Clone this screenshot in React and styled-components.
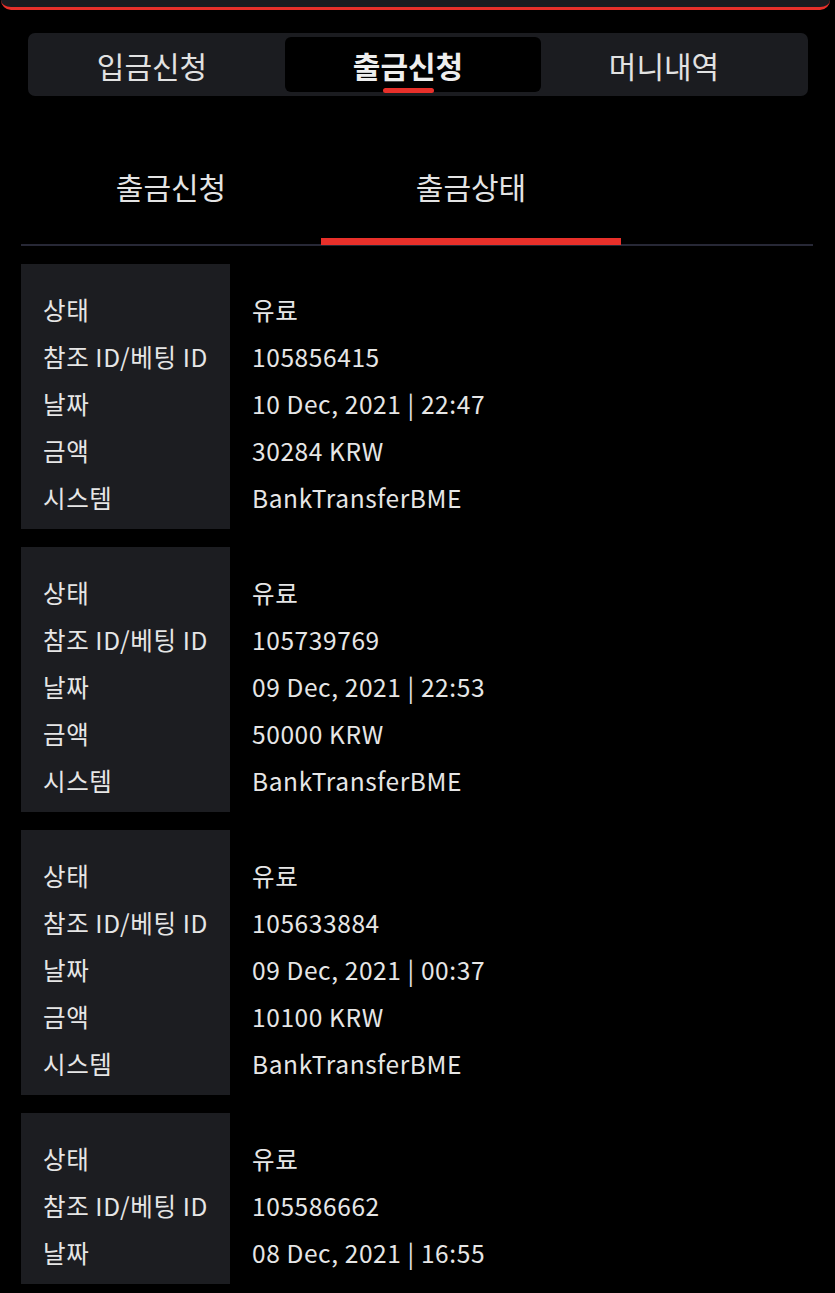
import React from "react";
import styled, { createGlobalStyle } from "styled-components";

const Global = createGlobalStyle`
  html, body { margin: 0; padding: 0; background: #000; overflow: hidden; }
  body { font-family: "Noto Sans CJK KR", "Noto Sans", sans-serif; color: #e6e6e6; }
  * { box-sizing: border-box; }
`;

const Page = styled.div`
  width: 835px;
  height: 1293px;
  background: #000;
  display: flex;
  flex-direction: column;
`;

const HeaderEdge = styled.div`
  height: 10px;
  margin: 0 5px 0 1px;
  background: #1b1c20;
  border-bottom: 3px solid #e8302a;
  border-radius: 0 0 12px 12px;
`;

const TabBar = styled.div`
  margin: 23px 27px 0 28px;
  height: 63px;
  padding: 4px 0 4px 1px;
  background: #1b1c20;
  border-radius: 7px;
  display: grid;
  grid-template-columns: repeat(3, 256px);
`;

const Tab = styled.div`
  position: relative;
  display: flex;
  align-items: center;
  justify-content: center;
  padding-right: 10px;
  font-size: 30px;
  font-weight: ${(p) => (p.$active ? 700 : 400)};
  color: ${(p) => (p.$active ? "#eeeeee" : "#e2e2e2")};
  background: ${(p) => (p.$active ? "#000" : "transparent")};
  border-radius: 6px;
`;

const TabMark = styled.span`
  position: absolute;
  left: 98px;
  bottom: -1px;
  width: 51px;
  height: 5px;
  border-radius: 3px;
  background: #e8302a;
`;

const SubTabs = styled.div`
  margin: 32px 22px 0 21px;
  display: grid;
  grid-template-columns: 300px 300px;
  border-bottom: 2px solid #272836;
`;

const SubTab = styled.div`
  position: relative;
  height: 116px;
  display: flex;
  align-items: center;
  justify-content: center;
  font-size: 30px;
  color: #e4e4e4;
  &::after {
    content: "";
    display: ${(p) => (p.$active ? "block" : "none")};
    position: absolute;
    left: 0;
    right: 0;
    bottom: -1px;
    height: 7px;
    background: #e8302a;
  }
`;

const List = styled.div`
  margin: 18px 22px 0 21px;
  display: flex;
  flex-direction: column;
  gap: 18px;
`;

const Card = styled.div`
  display: grid;
  grid-template-columns: 209px 1fr;
`;

const Column = styled.div`
  padding: 22px 0 8px 22px;
  background: ${(p) => (p.$shaded ? "#1c1d21" : "transparent")};
  display: flex;
  flex-direction: column;
`;

const Cell = styled.div`
  height: 47px;
  line-height: 47px;
  font-size: 24.5px;
  letter-spacing: 0.6px;
  color: #e6e6e6;
  white-space: nowrap;
`;

const labels = ["상태", "참조 ID/베팅 ID", "날짜", "금액", "시스템"];

const records = [
  ["유료", "105856415", "10 Dec, 2021 | 22:47", "30284 KRW", "BankTransferBME"],
  ["유료", "105739769", "09 Dec, 2021 | 22:53", "50000 KRW", "BankTransferBME"],
  ["유료", "105633884", "09 Dec, 2021 | 00:37", "10100 KRW", "BankTransferBME"],
  ["유료", "105586662", "08 Dec, 2021 | 16:55"],
];

export default function App() {
  return (
    <Page>
      <Global />
      <HeaderEdge />
      <TabBar>
        <Tab>입금신청</Tab>
        <Tab $active>
          출금신청
          <TabMark />
        </Tab>
        <Tab>머니내역</Tab>
      </TabBar>
      <SubTabs>
        <SubTab>출금신청</SubTab>
        <SubTab $active>출금상태</SubTab>
      </SubTabs>
      <List>
        {records.map((rec, i) => (
          <Card key={i}>
            <Column $shaded>
              {rec.map((_, j) => (
                <Cell key={j}>{labels[j]}</Cell>
              ))}
            </Column>
            <Column>
              {rec.map((v, j) => (
                <Cell key={j}>{v}</Cell>
              ))}
            </Column>
          </Card>
        ))}
      </List>
    </Page>
  );
}
